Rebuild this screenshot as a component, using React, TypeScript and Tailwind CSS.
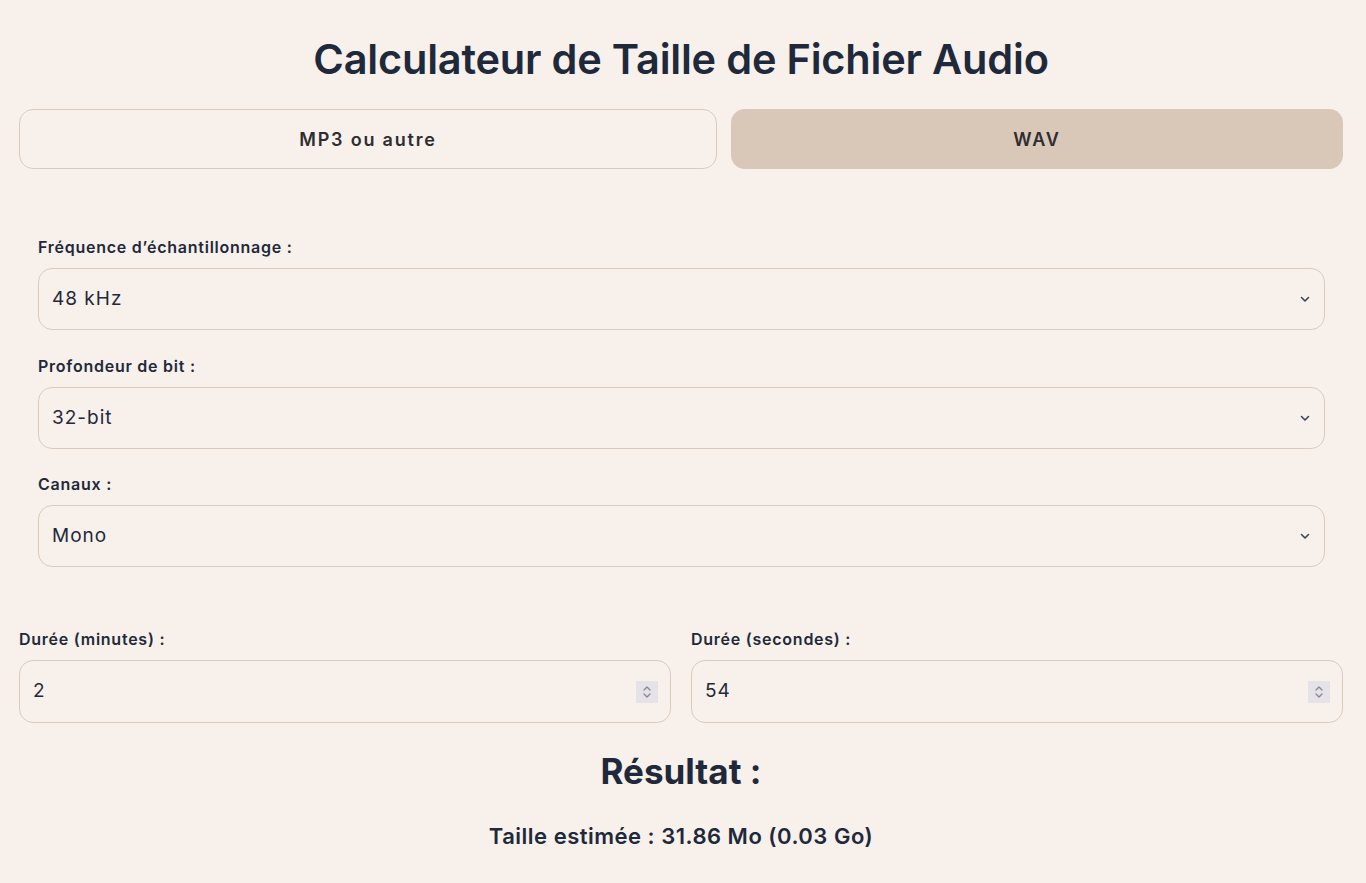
import React from "react";

const Chevron = () => (
  <svg width="10" height="7" viewBox="0 0 10 7" className="shrink-0">
    <path d="M1.5 1.5 L5 5 L8.5 1.5" fill="none" stroke="#3b4556" strokeWidth="1.6" strokeLinecap="round" strokeLinejoin="round" />
  </svg>
);

const Spinner = () => (
  <div className="w-[22px] h-[22px] bg-[#e6e3e8] flex items-center justify-center">
    <svg width="10" height="16" viewBox="0 0 10 16">
      <path d="M2 6 L5 3 L8 6" fill="none" stroke="#8a8793" strokeWidth="1.4" strokeLinecap="round" strokeLinejoin="round" />
      <path d="M2 10 L5 13 L8 10" fill="none" stroke="#8a8793" strokeWidth="1.4" strokeLinecap="round" strokeLinejoin="round" />
    </svg>
  </div>
);

const SelectField = ({ label, value, className }: { label: string; value: string; className?: string }) => (
  <div className={"flex flex-col " + (className ?? "")}>
    <div className="text-[16px] tracking-[0.75px] font-semibold text-[#1e293b] h-[21px] leading-[21px]">{label}</div>
    <div className="mt-[10px] h-[62px] rounded-[14px] border border-[#dccbbd] flex items-center justify-between pl-[13px] pr-[14px] text-[19px] tracking-[1px] text-[#1e293b]">
      <span>{value}</span>
      <Chevron />
    </div>
  </div>
);

const NumberField = ({ label, value }: { label: string; value: string }) => (
  <div className="flex flex-col flex-1">
    <div className="text-[16px] tracking-[0.75px] font-semibold text-[#1e293b] h-[21px] leading-[21px]">{label}</div>
    <div className="mt-[10px] h-[63px] rounded-[14px] border border-[#dccbbd] flex items-center justify-between pl-[13px] pr-[12px] text-[19px] tracking-[1px] text-[#1e293b]">
      <span>{value}</span>
      <Spinner />
    </div>
  </div>
);

export default function App() {
  return (
    <div
      className="min-h-[883px] bg-[#f8f0ea] text-[#1e293b]"
      style={{ fontFamily: "Inter, 'Open Sans', sans-serif" }}
    >
      <div className="w-[1324px] ml-[19px] pt-[34px]">
        <h1 className="text-center text-[41.5px] leading-[50px] font-semibold tracking-[-0.2px] text-[#1e293b]">
          Calculateur de Taille de Fichier Audio
        </h1>
        <div className="flex gap-[14px] mt-[25px]">
          <div className="w-[698px] h-[60px] rounded-[14px] border border-[#dccbbd] flex items-center justify-center text-[18px] tracking-[1.8px] font-semibold text-[#2d2d33]">
            MP3 ou autre
          </div>
          <div className="flex-1 h-[60px] rounded-[14px] bg-[#d9c7b8] flex items-center justify-center text-[18px] tracking-[1.8px] font-semibold text-[#2d2d33]">
            WAV
          </div>
        </div>
        <div className="pl-[19px] pr-[18px] mt-[68px] flex flex-col">
          <SelectField label="Fréquence d’échantillonnage :" value="48 kHz" />
          <SelectField className="mt-[26px]" label="Profondeur de bit :" value="32-bit" />
          <SelectField className="mt-[25px]" label="Canaux :" value="Mono" />
        </div>
        <div className="flex gap-[20px] mt-[62px]">
          <NumberField label="Durée (minutes) :" value="2" />
          <NumberField label="Durée (secondes) :" value="54" />
        </div>
        <div className="text-center mt-[26px] text-[35px] leading-[44px] font-bold text-[#1e293b]">Résultat :</div>
        <div className="text-center mt-[28px] text-[22px] tracking-[0.5px] leading-[30px] font-semibold text-[#1e293b]">
          Taille estimée : 31.86 Mo (0.03 Go)
        </div>
      </div>
    </div>
  );
}
